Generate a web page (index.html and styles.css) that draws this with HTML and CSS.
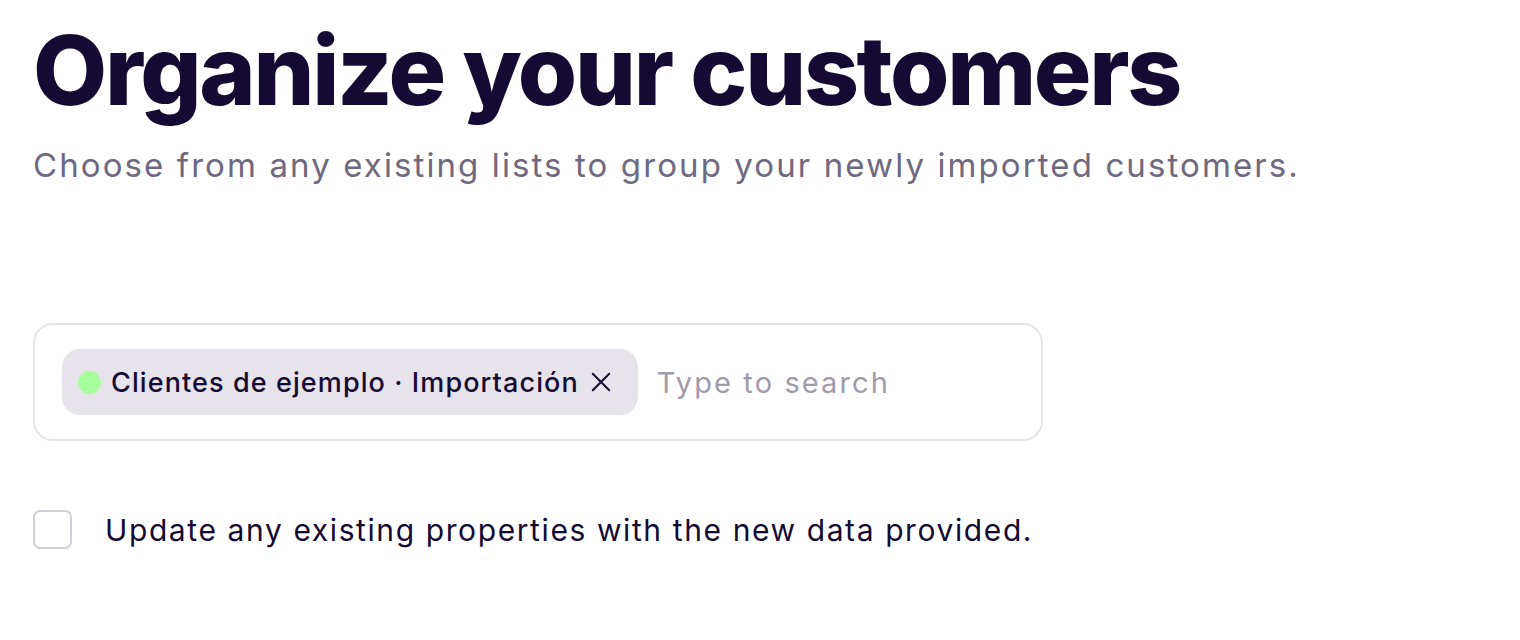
FILE: index.html
```html
<!DOCTYPE html>
<html lang="en">
<head>
<meta charset="utf-8">
<title>Organize your customers</title>
<link rel="stylesheet" href="styles.css">
</head>
<body>
<main class="page">
  <h1 class="title">Organize your customers</h1>
  <p class="subtitle">Choose from any existing lists to group your newly imported customers.</p>
  <div class="picker">
    <span class="chip">
      <span class="dot"></span>
      <span class="chip-label">Clientes de ejemplo · Importación</span>
      <svg class="chip-x" viewBox="0 0 24 24" width="22" height="22" aria-hidden="true"><path d="M3 3L21 21M21 3L3 21" stroke="#150a33" stroke-width="2.2" stroke-linecap="round" fill="none"/></svg>
    </span>
    <input class="search" type="text" placeholder="Type to search">
  </div>
  <label class="check-row">
    <span class="checkbox"></span>
    <span class="check-text">Update any existing properties with the new data provided.</span>
  </label>
</main>
</body>
</html>
```
FILE: styles.css
```css
* { box-sizing: border-box; }
html, body { margin: 0; background: #fff; }
body { font-family: Inter, "Noto Sans", sans-serif; color: #150a33; }
.page { padding: 10px 33px 0; }
.title {
  margin: 0;
  font-size: 96px;
  font-weight: 800;
  letter-spacing: -0.024em;
  line-height: 120px;
  color: #150a33;
  white-space: nowrap;
}
.subtitle {
  margin: 13px 0 0;
  font-size: 33px;
  line-height: 44px;
  letter-spacing: 2.1px;
  color: #6e6880;
  font-weight: 400;
  white-space: nowrap;
}
.picker {
  margin-top: 136px;
  width: 1010px;
  height: 118px;
  border: 2px solid #e6e4ea;
  border-radius: 20px;
  display: flex;
  align-items: center;
  padding: 0 27px;
  gap: 19px;
}
.chip {
  display: flex;
  align-items: center;
  flex: none;
  white-space: nowrap;
  height: 66px;
  background: #e6e4ea;
  border-radius: 18px;
  padding: 0 26px 0 16px;
  gap: 10px;
}
.dot { width: 23px; height: 23px; border-radius: 50%; background: #a8ff9e; flex: none; }
.chip-label { font-size: 27px; font-weight: 500; letter-spacing: 1.1px; color: #150a33; }
.chip-x { width: 22px; height: 22px; flex: none; margin-left: 1px; }
.search {
  border: 0;
  outline: 0;
  padding: 0;
  font-family: inherit;
  font-size: 29px;
  letter-spacing: 2.1px;
  color: #150a33;
  background: transparent;
  flex: 1;
  min-width: 0;
}
.search::placeholder { color: #a09bab; }
.check-row { display: flex; align-items: center; gap: 33px; margin-top: 69px; }
.checkbox {
  width: 39px; height: 39px;
  border: 2px solid #d0ced8;
  border-radius: 7px;
  flex: none;
}
.check-text { font-size: 30px; letter-spacing: 1.6px; color: #150a33; }
```
